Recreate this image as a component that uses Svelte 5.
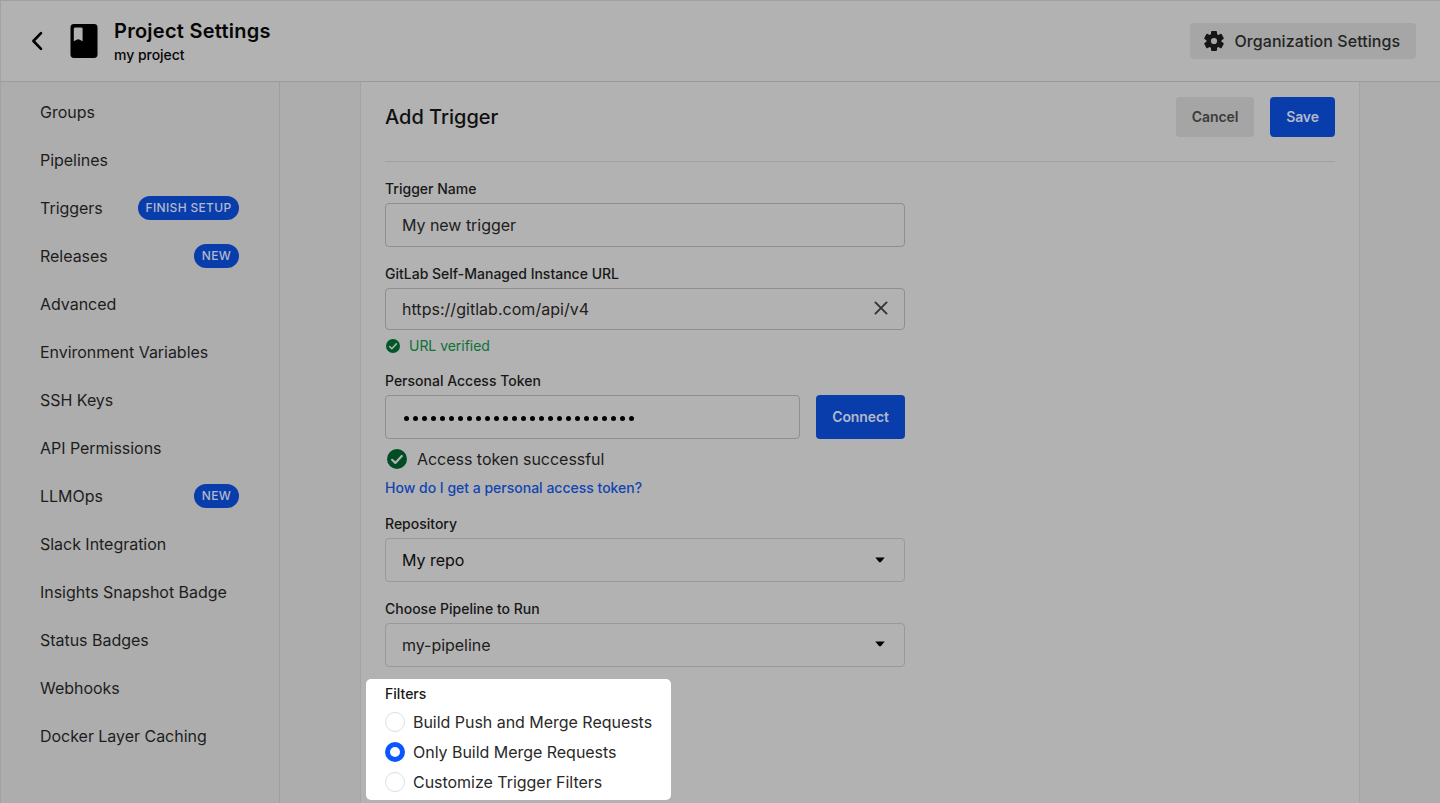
<script>
  const links = [
    { name: 'Groups' },
    { name: 'Pipelines' },
    { name: 'Triggers', badge: 'FINISH SETUP' },
    { name: 'Releases', badge: 'NEW' },
    { name: 'Advanced' },
    { name: 'Environment Variables' },
    { name: 'SSH Keys' },
    { name: 'API Permissions' },
    { name: 'LLMOps', badge: 'NEW' },
    { name: 'Slack Integration' },
    { name: 'Insights Snapshot Badge' },
    { name: 'Status Badges' },
    { name: 'Webhooks' },
    { name: 'Docker Layer Caching' }
  ];
  const filters = ['Build Push and Merge Requests', 'Only Build Merge Requests', 'Customize Trigger Filters'];
  let selected = $state(1);
  const dots = Array.from({ length: 26 });
</script>

{#snippet check(size)}
  <svg width={size} height={size} viewBox="0 0 20 20">
    <circle cx="10" cy="10" r="10" fill="currentColor" />
    <path d="M5.1 10.8l3.2 3.1 6.5-6.9" fill="none" stroke="#b2b2b2" stroke-width="2.2" stroke-linecap="round" stroke-linejoin="round" />
  </svg>
{/snippet}

{#snippet caret()}
  <svg class="caret" width="10" height="6" viewBox="0 0 10 6"><path d="M.3.4h9.4L6.2 4.7Q5 6 3.8 4.7z" fill="#000" /></svg>
{/snippet}

<div class="page">
  <header>
    <svg class="back" width="12" height="20" viewBox="0 0 12 20"><path d="M10 2.2L2.4 10l7.6 7.8" fill="none" stroke="#000" stroke-width="2.6" stroke-linecap="round" stroke-linejoin="round" /></svg>
    <svg class="book" width="28" height="34" viewBox="0 0 28 34">
      <rect x=".5" width="27" height="34" rx="3.4" fill="#000" />
      <path d="M5.4 3.6h5.8q1.4 0 1.4 1.4v12.2l-3.4-1.6q-1-.5-2 0l-3.4 1.6V5q0-1.4 1.6-1.4z" fill="#b2b2b2" />
    </svg>
    <div class="titles">
      <h1>Project Settings</h1>
      <p>my project</p>
    </div>
    <button class="org">
      <svg width="24" height="24" viewBox="0 0 24 24" fill="#161616">
        {#each [0, 60, 120] as angle}
          <rect x="9" y="2" width="6" height="20" rx="1.1" transform="rotate({angle} 12 12)" />
        {/each}
        <circle cx="12" cy="12" r="7.6" />
        <circle cx="12" cy="12" r="3.1" fill="#a6a6a6" />
      </svg>
      <span>Organization Settings</span>
    </button>
  </header>

  <div class="body">
    <nav>
      {#each links as link}
        <a href="#top"><span>{link.name}</span>{#if link.badge}<b>{link.badge}</b>{/if}</a>
      {/each}
    </nav>
    <main>
      <section class="card">
        <div class="card-head">
          <h2>Add Trigger</h2>
          <button class="cancel">Cancel</button>
          <button class="primary save">Save</button>
        </div>

        <div class="field">
          <div class="label">Trigger Name</div>
          <div class="input"><span>My new trigger</span></div>
        </div>

        <div class="field">
          <div class="label">GitLab Self-Managed Instance URL</div>
          <div class="input short">
            <span class="address">https://gitlab.com/api/v4</span>
            <svg class="clear" width="14" height="14" viewBox="0 0 14 14"><path d="M1.4 1.4l11.2 11.2M12.6 1.4L1.4 12.6" stroke="#303030" stroke-width="1.8" stroke-linecap="round" /></svg>
          </div>
          <div class="verified">{@render check(14)}<span>URL verified</span></div>
        </div>

        <div class="field access">
          <div class="label">Personal Access Token</div>
          <div class="token-row">
            <div class="input token">{#each dots as _}<i></i>{/each}</div>
            <button class="primary connect">Connect</button>
          </div>
          <div class="success">{@render check(20)}<span>Access token successful</span></div>
          <a class="help" href="#top">How do I get a personal access token?</a>
        </div>

        <div class="field">
          <div class="label">Repository</div>
          <div class="input select"><span class="dark">My repo</span>{@render caret()}</div>
        </div>

        <div class="field pipeline">
          <div class="label">Choose Pipeline to Run</div>
          <div class="input select"><span>my-pipeline</span>{@render caret()}</div>
        </div>

        <div class="filters">
          <div class="label">Filters</div>
          {#each filters as filter, i}
            <button class="option" onclick={() => (selected = i)}>
              <span class="radio" class:on={selected === i}></span><span>{filter}</span>
            </button>
          {/each}
        </div>
      </section>
    </main>
  </div>
</div>

<style>
  :global(body) { background: #adadad; overflow: hidden; }
  .page {
    width: 1440px; height: 803px; overflow: hidden;
    border-left: 1px solid #a2a2a2; border-top: 1px solid #a0a0a0;
    display: flex; flex-direction: column;
    font-family: Inter, sans-serif; font-size: 16px; letter-spacing: -.03px; color: #1d1d1d; background: #adadad;
  }
  * { box-sizing: border-box; }
  h1, h2, p { margin: 0; }
  svg { display: block; flex: none; }
  button { font: inherit; letter-spacing: inherit; color: inherit; border: 0; margin: 0; cursor: pointer; }
  a { text-decoration: none; color: inherit; }
  span { white-space: nowrap; }

  header {
    flex: none; height: 81px; display: flex; align-items: center;
    background: #b2b2b2; border-bottom: 1px solid #9b9b9b; padding: 0 24px 0 30px;
  }
  .book { margin-left: 27px; }
  .titles { margin-left: 16px; color: #060606; flex: 1; }
  h1 { font-size: 20px; font-weight: 600; line-height: 26px; letter-spacing: .25px; margin-top: 1px; }
  p { font-size: 14px; font-weight: 500; line-height: 22px; }
  .org {
    width: 226px; height: 36px; display: flex; align-items: center; gap: 8.5px;
    padding: 0 0 0 12px; border-radius: 4px; background: #a6a6a6; font-weight: 500; color: #242424;
    letter-spacing: .07px;
  }

  .body { flex: 1; min-height: 0; display: flex; }
  nav { width: 279px; border-right: 1px solid #9f9f9f; padding: 6px 40px 0 39px; }
  nav a { display: flex; align-items: center; justify-content: space-between; height: 48px; }
  nav b {
    min-width: 45px; height: 24px; line-height: 24px; padding: 0 7.5px; border-radius: 12px; background: #0a3dac;
    color: #b2b9c9; font-size: 12px; font-weight: 500; letter-spacing: .33px; text-align: center;
  }

  main { flex: 1; padding-left: 80px; }
  .card {
    width: 1000px; height: 100%; padding: 0 24px; background: #b2b2b2;
    border-left: 1px solid #a4a4a4; border-right: 1px solid #a4a4a4;
  }
  .card-head { display: flex; align-items: center; height: 80px; padding-bottom: 9px; border-bottom: 1px solid #a1a1a1; }
  h2 { flex: 1; font-size: 20px; font-weight: 500; color: #101010; letter-spacing: 0; }
  .cancel, .primary { height: 40px; padding: 0 0 2px; border-radius: 4px; font-size: 14px; font-weight: 600; letter-spacing: -.1px; }
  .cancel { width: 78px; background: #a5a5a5; color: #3b3b3b; }
  .primary { background: #0a3dac; color: #b2b9c9; }
  .save { width: 65px; margin-left: 16px; }

  .field { width: 520px; margin-top: 13px; }
  .label { height: 28px; line-height: 28px; font-size: 14px; font-weight: 500; letter-spacing: 0; color: #181818; }
  .input {
    height: 44px; display: flex; align-items: center; justify-content: space-between;
    padding: 0 16px; border: 1px solid #8e8e8e; border-radius: 4px; color: #202020;
  }
  .short { height: 42px; }
  .address { letter-spacing: .03px; }
  .select { padding-right: 19px; border-color: #999; }
  .dark { color: #0c0c0c; }
  .clear { margin-top: -3px; }
  .pipeline .caret { margin-top: -2px; }
  .verified { height: 32px; display: flex; align-items: center; gap: 9px; padding-left: 1px; font-size: 14px; color: #0b7138; }
  .verified span { margin-top: -1.5px; }
  .verified svg { color: #005728; }
  .access { margin-top: 5px; }
  .token-row { display: flex; gap: 16px; }
  .token { width: 415px; justify-content: flex-start; gap: 4px; padding: 2px 0 0 17.5px; }
  .token i { width: 5px; height: 5px; border-radius: 50%; background: #000; }
  .connect { width: 89px; height: 44px; }
  .success { height: 40px; display: flex; align-items: center; gap: 10px; padding-left: 2px; }
  .success svg { color: #004d24; }
  .help { display: block; height: 18px; line-height: 18px; font-size: 14px; font-weight: 500; letter-spacing: 0; color: #1145b2; white-space: nowrap; }

  .filters { width: 305px; height: 121px; margin: 12px 0 0 -19px; padding: 2px 0 3px 19px; border-radius: 5px; background: #fff; color: #292929; }
  .filters .label { height: 26px; line-height: 26px; }
  .option { display: flex; align-items: center; gap: 8px; height: 30px; padding: 0; background: none; }
  .radio { width: 20px; height: 20px; border: 1.5px solid #dedede; border-radius: 50%; background: #fff; }
  .radio.on { border: 5px solid #0a57ff; }
</style>
